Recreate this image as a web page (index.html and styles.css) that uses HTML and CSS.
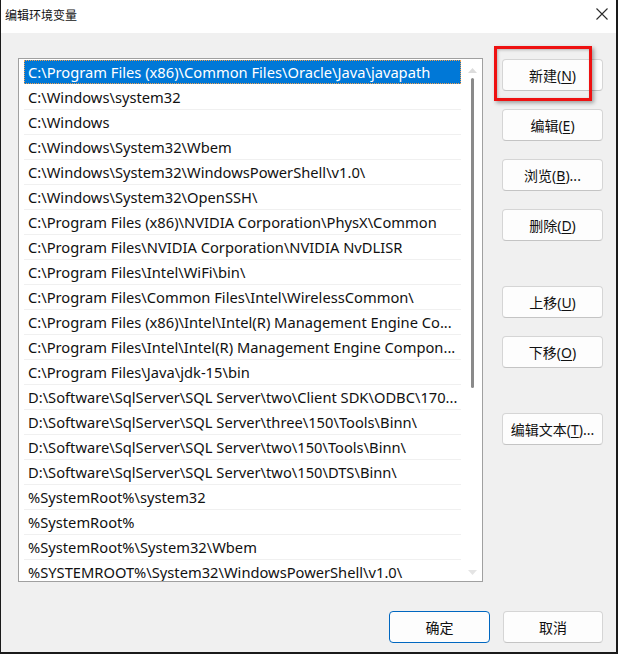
FILE: index.html
```html
<!DOCTYPE html>
<html lang="zh-CN">
<head>
<meta charset="utf-8">
<title>编辑环境变量</title>
<link rel="stylesheet" href="styles.css">
</head>
<body>
<div class="window">
  <div class="titlebar">
    <span class="title">编辑环境变量</span>
    <svg class="close" width="12" height="12" viewBox="0 0 12 12"><path d="M0.5 0.5 L11.5 11.5 M11.5 0.5 L0.5 11.5" stroke="#2b2b2b" stroke-width="1.1" fill="none"/></svg>
  </div>
  <div class="content">
    <div class="main">
      <div class="listbox">
        <div class="rows">
          <div class="row selected">C:\Program Files (x86)\Common Files\Oracle\Java\javapath</div>
          <div class="row">C:\Windows\system32</div>
          <div class="row">C:\Windows</div>
          <div class="row">C:\Windows\System32\Wbem</div>
          <div class="row">C:\Windows\System32\WindowsPowerShell\v1.0\</div>
          <div class="row">C:\Windows\System32\OpenSSH\</div>
          <div class="row">C:\Program Files (x86)\NVIDIA Corporation\PhysX\Common</div>
          <div class="row">C:\Program Files\NVIDIA Corporation\NVIDIA NvDLISR</div>
          <div class="row">C:\Program Files\Intel\WiFi\bin\</div>
          <div class="row">C:\Program Files\Common Files\Intel\WirelessCommon\</div>
          <div class="row">C:\Program Files (x86)\Intel\Intel(R) Management Engine Co...</div>
          <div class="row">C:\Program Files\Intel\Intel(R) Management Engine Compon...</div>
          <div class="row">C:\Program Files\Java\jdk-15\bin</div>
          <div class="row">D:\Software\SqlServer\SQL Server\two\Client SDK\ODBC\170...</div>
          <div class="row">D:\Software\SqlServer\SQL Server\three\150\Tools\Binn\</div>
          <div class="row">D:\Software\SqlServer\SQL Server\two\150\Tools\Binn\</div>
          <div class="row">D:\Software\SqlServer\SQL Server\two\150\DTS\Binn\</div>
          <div class="row">%SystemRoot%\system32</div>
          <div class="row">%SystemRoot%</div>
          <div class="row">%SystemRoot%\System32\Wbem</div>
          <div class="row last">%SYSTEMROOT%\System32\WindowsPowerShell\v1.0\</div>
        </div>
        <div class="scrollbar">
          <svg class="arrow" width="9" height="5" viewBox="0 0 9 5"><path d="M0 5 L4.5 0 L9 5 Z" fill="#dcdcdc"/></svg>
          <div class="track"><div class="thumb"></div></div>
          <svg class="arrow" width="9" height="5" viewBox="0 0 9 5"><path d="M0 0 L4.5 5 L9 0 Z" fill="#e4e4e4"/></svg>
        </div>
      </div>
      <div class="side">
        <div class="btn-wrap">
          <button class="btn">新建(<u>N</u>)</button>
          <div class="highlight"></div>
        </div>
        <button class="btn">编辑(<u>E</u>)</button>
        <button class="btn">浏览(<u>B</u>)...</button>
        <button class="btn">删除(<u>D</u>)</button>
        <button class="btn gap-top">上移(<u>U</u>)</button>
        <button class="btn">下移(<u>O</u>)</button>
        <button class="btn gap-top">编辑文本(<u>T</u>)...</button>
      </div>
    </div>
    <div class="footer">
      <button class="btn primary">确定</button>
      <button class="btn cancel">取消</button>
    </div>
  </div>
</div>
</body>
</html>
```

FILE: styles.css
```css
* { box-sizing: border-box; }
html, body { margin: 0; padding: 0; background: #ffffff; }
body {
  font-family: "Noto Sans", "Noto Sans CJK SC", sans-serif;
  color: #111;
}
.window {
  width: 618px;
  height: 654px;
  display: flex;
  flex-direction: column;
  border-left: 1px solid #1a1a1a;
  border-right: 2px solid #1a1a1a;
  border-bottom: 2px solid #1a1a1a;
  background: #f0f0f0;
}
.titlebar {
  height: 33px;
  background: #ffffff;
  display: flex;
  align-items: center;
  justify-content: space-between;
  padding: 0 8px 0 4px;
  flex: none;
}
.title {
  font-family: "Noto Sans CJK SC", sans-serif;
  font-size: 12px;
  color: #111;
  margin-top: -4px;
}
.close { margin-top: -5px; }
.content {
  flex: 1;
  display: flex;
  flex-direction: column;
  padding: 25px 12px 0 17px;
}
.main {
  display: flex;
  gap: 19px;
}
.listbox {
  width: 465px;
  height: 524px;
  background: #ffffff;
  border: 1px solid #a0a0a0;
  display: flex;
  padding: 1px 0 0 5px;
  overflow: hidden;
}
.rows {
  width: 437px;
  flex: none;
}
.row {
  height: 25px;
  line-height: 24px;
  border-bottom: 1px solid #f0f0f0;
  padding-left: 4px;
  font-size: 14.7px;
  white-space: nowrap;
  overflow: hidden;
  color: #111;
}
.row.selected {
  background: #0078d7;
  color: #ffffff;
  outline: 1px dotted #f0a050;
  outline-offset: -1px;
  border-bottom-color: #0078d7;
  height: 24px;
  margin-bottom: 1px;
}
.scrollbar {
  flex: 1;
  display: flex;
  flex-direction: column;
  align-items: center;
  padding: 8px 0 6px 0;
  margin-left: 1px;
}
.arrow { flex: none; }
.track {
  flex: 1;
  width: 100%;
  display: flex;
  justify-content: center;
  padding-top: 5px;
}
.thumb {
  width: 3px;
  height: 310px;
  background: #8a8a8a;
  border-radius: 2px;
}
.side {
  display: flex;
  flex-direction: column;
  gap: 18px;
  padding-top: 1px;
}
.btn {
  width: 101px;
  height: 32px;
  background: #fdfdfd;
  border: 1px solid #d5d5d5;
  border-bottom-color: #c4c4c4;
  border-radius: 4px;
  font-family: "Noto Sans", "Noto Sans CJK SC", sans-serif;
  font-size: 14px;
  color: #111;
  padding: 0;
  display: flex;
  align-items: center;
  justify-content: center;
}
.btn u { text-decoration-thickness: 1px; text-underline-offset: 2px; }
.gap-top { margin-top: 27px; }
.btn-wrap { position: relative; }
.highlight {
  position: absolute;
  left: -8px;
  top: -13px;
  width: 98px;
  height: 55px;
  border: 3px solid #ee1111;
  box-shadow: 2px 2px 4px rgba(0,0,0,0.35), inset 1px 1px 3px rgba(0,0,0,0.25);
}
.footer {
  display: flex;
  justify-content: flex-end;
  gap: 13px;
  margin-top: 29px;
  padding-right: 1px;
}
.btn.primary {
  border: 1px solid #0067c0;
  width: 101px;
}
.btn.cancel { width: 100px; }
```
